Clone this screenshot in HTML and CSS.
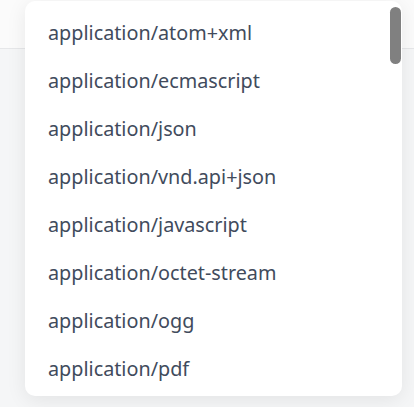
FILE: index.html
```html
<!DOCTYPE html>
<html lang="en">
<head>
    <meta charset="UTF-8">
    <meta name="viewport" content="width=device-width, initial-scale=1.0">
    <title>Content type</title>
    <link rel="stylesheet" href="styles.css">
</head>
<body>
    <div class="topbar"></div>
    <div class="dropdown">
        <ul class="options">
            <li>application/atom+xml</li>
            <li>application/ecmascript</li>
            <li>application/json</li>
            <li>application/vnd.api+json</li>
            <li>application/javascript</li>
            <li>application/octet-stream</li>
            <li>application/ogg</li>
            <li>application/pdf</li>
        </ul>
        <div class="thumb"></div>
    </div>
</body>
</html>
```

FILE: styles.css
```css
body {
    margin: 0;
    background-color: #f5f6f7;
    font-family: "Noto Sans", "Open Sans", sans-serif;
    height: 407px;
    overflow: hidden;
}
.topbar {
    height: 48px;
    background-color: #fbfbfb;
    border-bottom: 1px solid #e6e7e9;
}
.dropdown {
    position: absolute;
    top: 1px;
    left: 25px;
    width: 377px;
    height: 395px;
    background: white;
    border-radius: 10px;
    box-shadow: 0 4px 20px rgba(0, 0, 0, 0.08);
    overflow: hidden;
}
.options {
    list-style: none;
    margin: 0;
    padding: 8px 0 0;
}
.options li {
    height: 48px;
    line-height: 48px;
    padding-left: 23px;
    font-size: 19.8px;
    color: #414b5c;
}
.thumb {
    position: absolute;
    top: 6px;
    right: 1px;
    width: 11px;
    height: 57px;
    border-radius: 6px;
    background-color: #808080;
}
```
